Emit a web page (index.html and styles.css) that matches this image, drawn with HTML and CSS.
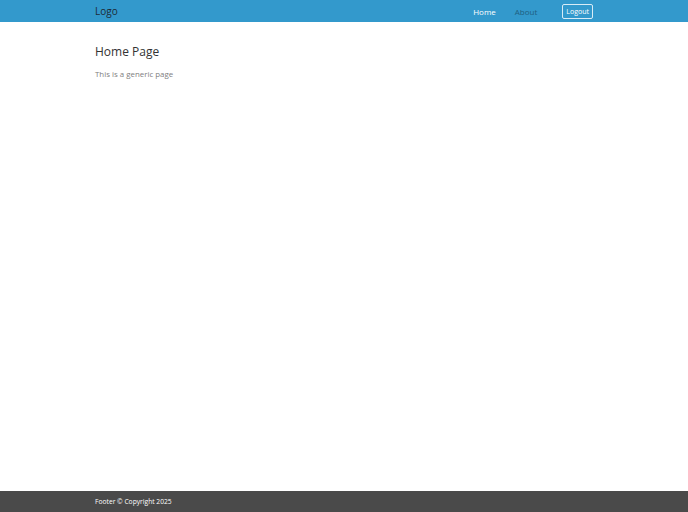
FILE: index.html
```html
<!DOCTYPE html>
<html lang="en">
<head>
  <meta charset="UTF-8">
  <title>Home Page</title>
  <meta name="viewport" content="width=device-width, initial-scale=1.0">
  <link rel="stylesheet" href="styles.css">
</head>
<body>
  <div class="page">
    <header class="nav-bar">
      <div class="container nav-inner">
        <a class="logo" href="#">Logo</a>
        <nav class="nav-links">
          <a class="nav-link active" href="#">Home</a>
          <a class="nav-link" href="#">About</a>
          <button class="logout-btn">Logout</button>
        </nav>
      </div>
    </header>

    <main class="container content">
      <h1 class="page-title">Home Page</h1>
      <p class="page-text">This is a generic page</p>
    </main>

    <footer class="footer">
      <div class="container">Footer © Copyright 2025</div>
    </footer>
  </div>
</body>
</html>
```

FILE: styles.css
```css
html, body {
  margin: 0; padding: 0;
  height: 100%;
  background: #fff;
  font-family: 'Open Sans', 'Liberation Sans', sans-serif;
}
.page {
  min-height: 100vh;
  display: flex;
  flex-direction: column;
}
.container {
  width: 498px;
  margin: 0 auto;
  box-sizing: border-box;
}
.nav-bar {
  background: #3399cc;
  height: 22px;
  display: flex;
  align-items: center;
}
.nav-inner {
  display: flex;
  align-items: center;
  justify-content: space-between;
}
.logo {
  color: #1d2b36;
  font-size: 10px;
  text-decoration: none;
}
.nav-links {
  display: flex;
  align-items: center;
}
.nav-link {
  font-size: 8px;
  color: #20607f;
  text-decoration: none;
  margin-right: 19px;
}
.nav-link.active { color: #fff; }
.nav-link:last-of-type { margin-right: 25px; }
.logout-btn {
  background: none;
  border: 1px solid #d8ecf6;
  color: #fff;
  font-family: inherit;
  font-size: 7px;
  border-radius: 2px;
  height: 15px;
  padding: 0 3px;
  cursor: pointer;
}
.content {
  flex: 1;
  padding-top: 21px;
}
.page-title {
  margin: 0 0 9px 0;
  font-size: 12px;
  font-weight: 400;
  color: #333;
}
.page-text {
  margin: 0;
  font-size: 7.9px;
  font-weight: 400;
  color: #808080;
}
.footer {
  background: #4a4a4a;
  height: 21px;
  display: flex;
  align-items: center;
  color: #fff;
  font-size: 6.7px;
}
```
